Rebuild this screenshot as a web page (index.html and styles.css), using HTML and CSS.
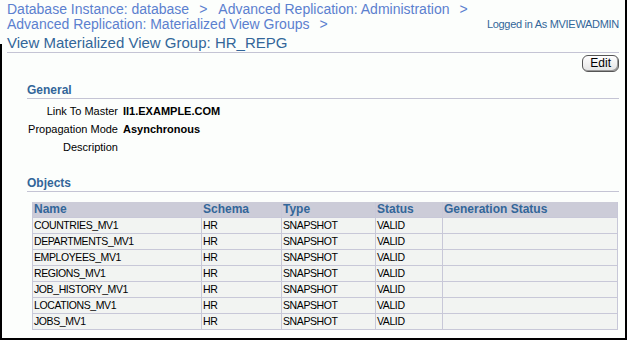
FILE: index.html
```html
<!DOCTYPE html>
<html>
<head>
<meta charset="utf-8">
<link rel="stylesheet" href="styles.css">
</head>
<body>
<div class="page">
  <div class="top">
    <div class="crumbs">
      <div class="crumb-line"><a>Database Instance: database</a><span class="sep">&gt;</span><a>Advanced Replication: Administration</a><span class="sep">&gt;</span></div>
      <div class="crumb-line"><a>Advanced Replication: Materialized View Groups</a><span class="sep">&gt;</span></div>
    </div>
    <div class="login">Logged in As MVIEWADMIN</div>
  </div>
  <h1 class="title">View Materialized View Group: HR_REPG</h1>
  <div class="actions"><button class="btn">Edit</button></div>

  <div class="section">
    <h2 class="sec-head">General</h2>
    <div class="props">
      <div class="plabel">Link To Master</div><div class="pval">II1.EXAMPLE.COM</div>
      <div class="plabel">Propagation Mode</div><div class="pval">Asynchronous</div>
      <div class="plabel">Description</div><div class="pval"></div>
    </div>
  </div>

  <div class="section objects">
    <h2 class="sec-head">Objects</h2>
    <table class="grid">
      <colgroup><col class="c1"><col class="c2"><col class="c3"><col class="c4"><col class="c5"></colgroup>
      <thead>
        <tr><th>Name</th><th>Schema</th><th>Type</th><th>Status</th><th>Generation Status</th></tr>
      </thead>
      <tbody>
        <tr><td>COUNTRIES_MV1</td><td>HR</td><td>SNAPSHOT</td><td>VALID</td><td></td></tr>
        <tr><td>DEPARTMENTS_MV1</td><td>HR</td><td>SNAPSHOT</td><td>VALID</td><td></td></tr>
        <tr><td>EMPLOYEES_MV1</td><td>HR</td><td>SNAPSHOT</td><td>VALID</td><td></td></tr>
        <tr><td>REGIONS_MV1</td><td>HR</td><td>SNAPSHOT</td><td>VALID</td><td></td></tr>
        <tr><td>JOB_HISTORY_MV1</td><td>HR</td><td>SNAPSHOT</td><td>VALID</td><td></td></tr>
        <tr><td>LOCATIONS_MV1</td><td>HR</td><td>SNAPSHOT</td><td>VALID</td><td></td></tr>
        <tr><td>JOBS_MV1</td><td>HR</td><td>SNAPSHOT</td><td>VALID</td><td></td></tr>
      </tbody>
    </table>
  </div>
</div>
</body>
</html>
```
FILE: styles.css
```css
html, body {
  margin: 0;
  padding: 0;
  background: #fcfefc;
}
body {
  font-family: "Liberation Sans", Arial, sans-serif;
  color: #000;
}
.page {
  position: relative;
  width: 625px;
  height: 338px;
  border-right: 2px solid #000;
  border-bottom: 2px solid #000;
  box-sizing: content-box;
  overflow: hidden;
}
.page::before {
  content: "";
  position: absolute;
  left: 0;
  top: 44px;
  bottom: 0;
  width: 2px;
  background: #000;
}
.top {
  display: flex;
  justify-content: space-between;
  align-items: flex-end;
  padding: 2px 6px 0 7px;
}
.crumb-line {
  font-size: 14px;
  line-height: 15px;
  color: #5b80cf;
  white-space: nowrap;
}
.crumb-line a { color: #5b80cf; }
.sep { margin: 0 11px 0 10px; }
.login {
  font-size: 11px;
  letter-spacing: -0.3px;
  line-height: 15px;
  color: #336699;
  white-space: nowrap;
}
.title {
  margin: 2px 6px 0 7px;
  font-size: 15px;
  font-weight: normal;
  line-height: 18px;
  color: #336699;
  padding-bottom: 0;
  border-bottom: 1px solid #c4c4d4;
}
.actions {
  display: flex;
  justify-content: flex-end;
  padding: 2px 6px 0 0;
}
.btn {
  font-family: "Liberation Sans", Arial, sans-serif;
  font-size: 12px;
  line-height: 13px;
  height: 17px;
  padding: 1px 7px;
  border: 1px solid #555;
  border-radius: 6px;
  background: linear-gradient(#ffffff, #e4e4e4);
  color: #000;
  box-shadow: inset -1px -1px 0 #999;
}
.section {
  margin: 0 6px 0 27px;
}
.sec-head {
  margin: 11px 0 0 0;
  font-size: 12px;
  font-weight: bold;
  line-height: 15px;
  color: #336699;
  border-bottom: 1px solid #c4c4d4;
  padding-bottom: 0;
}
.props {
  display: grid;
  grid-template-columns: 91px auto;
  column-gap: 5px;
  margin-top: 3px;
  font-size: 11px;
  line-height: 18px;
}
.plabel { text-align: right; white-space: nowrap; }
.pval { font-weight: bold; min-height: 18px; }
.objects .sec-head { margin-top: 20px; }
.grid {
  margin: 10px 0 0 5px;
  width: 585px;
  border-collapse: collapse;
  table-layout: fixed;
  font-size: 10.5px;
  letter-spacing: -0.4px;
}
.c1 { width: 169px; }
.c2 { width: 80px; }
.c3 { width: 94px; }
.c4 { width: 67px; }
.c5 { width: 175px; }
.grid th {
  background: #ccccd8;
  color: #336699;
  font-size: 12px;
  letter-spacing: 0;
  font-weight: bold;
  text-align: left;
  padding: 0 1px;
  height: 15px;
  line-height: 15px;
  border: 1px solid #c8c8d8;
  border-top: 0;
}
.grid td {
  background: #f2f4f2;
  padding: 0 1px;
  height: 15px;
  line-height: 15px;
  border: 1px solid #c8c8d8;
  white-space: nowrap;
}
```
